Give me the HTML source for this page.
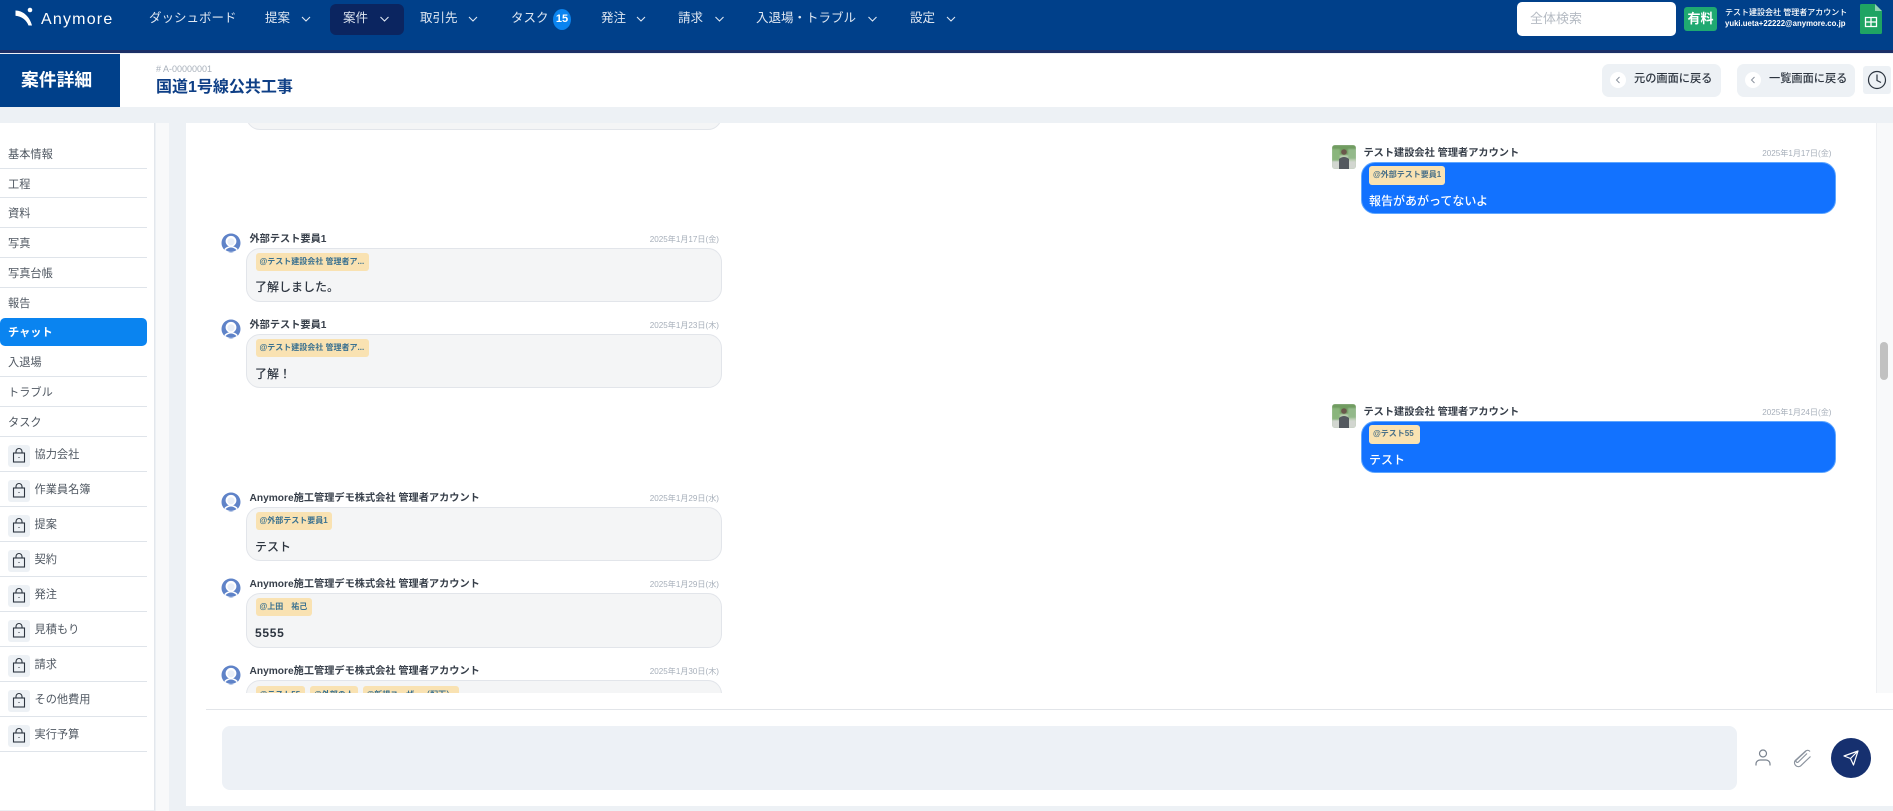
<!DOCTYPE html>
<html lang="ja">
<head>
<meta charset="utf-8">
<title>案件詳細</title>
<style>
html,body{margin:0;padding:0}
body{width:1893px;height:811px;position:relative;overflow:hidden;background:#edf1f5;font-family:"Liberation Sans","Noto Sans CJK JP",sans-serif;color:#2d3540}
.a{position:absolute;box-sizing:border-box}
.t{position:absolute;white-space:nowrap;line-height:16px;height:16px}
.nav{color:#dfe7f2;font-size:12.5px;top:10px}
.side{color:#4f5761;font-size:11.2px;left:8px;margin-top:1px}
.div{position:absolute;left:0;width:147px;height:1px;background:#dfe4ea}
.ib{position:absolute;left:8px;width:22px;height:22px;border-radius:3px;background:#edf1f5}
.name{font-size:10.2px;font-weight:700;color:#373f4a;margin-top:2px}
.date{font-size:8.1px;color:#a7afba;text-align:right;width:90px;margin-top:2px}
.bub{position:absolute;left:246px;width:474px;background:#f4f5f6;border:1px solid #e2e5ea;border-radius:14px}
.me{position:absolute;left:1361px;width:473px;height:50px;background:#1272ff;border-radius:14px;border:1px solid #5ea6ff}
.tag{position:absolute;height:18px;background:#f9e2b2;border-radius:3px;color:#3a7190;font-size:8px;font-weight:700;line-height:17px;padding-left:4px;box-sizing:border-box;white-space:nowrap;overflow:hidden}
.msg{font-size:12px;font-weight:500;color:#2d3540;left:255px}
</style>
</head>
<body>
<!-- top bar -->
<div class="a" style="left:0;top:0;width:1893px;height:50px;background:#00408a"></div>
<div class="a" style="left:0;top:50px;width:1893px;height:3px;background:#1c2f66"></div>
<svg class="a" style="left:14px;top:6px" width="22" height="22" viewBox="0 0 22 22"><path d="M1.500 4.500C8.500 4.500 15.500 10 18 19.500L14.500 19.500C12.500 14 7.500 10.500 1.500 9.800z" fill="#fff"/><circle cx="16" cy="4" r="2.300" fill="#fff"/></svg>
<div class="t" style="left:41px;top:12px;color:#fff;font-size:16px;letter-spacing:1.200px">Anymore</div>
<div class="a" style="left:330px;top:4px;width:74px;height:31px;background:#0b2560;border-radius:6px"></div>
<div class="t nav" style="left:149px">ダッシュボード</div>
<div class="t nav" style="left:265px">提案</div>
<div class="t nav" style="left:343px">案件</div>
<div class="t nav" style="left:420px">取引先</div>
<div class="t nav" style="left:511px">タスク</div>
<div class="a" style="left:553px;top:9px;width:18px;height:21px;border-radius:50%;background:#0a84f0;color:#fff;font-size:11px;font-weight:700;text-align:center;line-height:21px">15</div>
<div class="t nav" style="left:601px">発注</div>
<div class="t nav" style="left:678px">請求</div>
<div class="t nav" style="left:756px">入退場・トラブル</div>
<div class="t nav" style="left:910px">設定</div>
<svg class="a" style="left:0;top:0" width="1000" height="40" fill="none" stroke="#dfe7f2" stroke-width="1.100"><path d="M302 17l4 4 4-4M380.500 17l4 4 4-4M469 17l4 4 4-4M637 17l4 4 4-4M715.500 17l4 4 4-4M868.500 17l4 4 4-4M947 17l4 4 4-4"/></svg>
<div class="a" style="left:1517px;top:2px;width:159px;height:34px;background:#fff;border-radius:5px"></div>
<div class="t" style="left:1530px;top:11px;font-size:13px;color:#b5bbc3">全体検索</div>
<div class="a" style="left:1684px;top:7px;width:33px;height:24px;background:#1fa971;border-radius:3px;color:#fff;font-size:13px;font-weight:700;text-align:center;line-height:24px">有料</div>
<div class="t" style="left:1725px;top:5px;color:#fff;font-size:8px;font-weight:500">テスト建設会社 管理者アカウント</div>
<div class="t" style="left:1725px;top:16px;color:#fff;font-size:7.800px;font-weight:700">yuki.ueta+22222@anymore.co.jp</div>
<svg class="a" style="left:1860px;top:4px" width="22" height="30" viewBox="0 0 22 30"><path d="M1.500 0H15L22 7V28.500a1.500 1.500 0 0 1-1.500 1.500h-19A1.500 1.500 0 0 1 0 28.500V1.500A1.500 1.500 0 0 1 1.500 0z" fill="#1fa463"/><path d="M15 0L22 7H15z" fill="#8fd3b0"/><path d="M5.500 13.500h11v9h-11zM5.500 18h11M11 13.500v9" fill="none" stroke="#fff" stroke-width="1.300"/></svg>

<!-- title row -->
<div class="a" style="left:0;top:54px;width:1893px;height:53px;background:#fff"></div>
<div class="a" style="left:0;top:54px;width:120px;height:53px;background:#00408a"></div>
<div class="t" style="left:21px;top:72px;color:#fff;font-size:17.800px;font-weight:700">案件詳細</div>
<div class="t" style="left:156px;top:61px;color:#a7afba;font-size:9px"># A-00000001</div>
<div class="t" style="left:156px;top:80px;color:#0e3f86;font-size:16px;font-weight:700">国道1号線公共工事</div>

<div class="a" style="left:1602px;top:64px;width:119px;height:33px;background:#edf1f5;border-radius:7px"></div>
<div class="a" style="left:1610px;top:72px;width:16px;height:16px;background:#fff;border-radius:50%"></div>
<div class="t" style="left:1634px;top:71px;font-size:11.200px;font-weight:500;color:#2d3540">元の画面に戻る</div>
<div class="a" style="left:1737px;top:64px;width:118px;height:33px;background:#edf1f5;border-radius:7px"></div>
<div class="a" style="left:1745px;top:72px;width:16px;height:16px;background:#fff;border-radius:50%"></div>
<div class="t" style="left:1769px;top:71px;font-size:11.200px;font-weight:500;color:#2d3540">一覧画面に戻る</div>
<svg class="a" style="left:1600px;top:70px" width="170" height="20" fill="none" stroke="#8b939e" stroke-width="1"><path d="M19.500 7l-3 3 3 3M154.500 7l-3 3 3 3"/></svg>
<div class="a" style="left:1863px;top:66px;width:28px;height:28px;background:#edf1f5;border-radius:3px"></div>
<svg class="a" style="left:1867px;top:70px" width="20" height="20" fill="none" stroke="#2d3540" stroke-width="1.200"><circle cx="10" cy="10" r="8.500"/><path d="M10 4.500V10.500L14 12.500"/></svg>

<!-- sidebar -->
<div class="a" style="left:0;top:123px;width:155px;height:688px;background:#fff;border-right:1px solid #e3e7ec;border-bottom:1px solid #eceff3"></div>
<div class="a" style="left:156px;top:123px;width:13px;height:688px;background:#f8f9fa"></div>
<div class="t side" style="top:146px">基本情報</div><div class="div" style="top:168px"></div>
<div class="t side" style="top:176px">工程</div><div class="div" style="top:197px"></div>
<div class="t side" style="top:205px">資料</div><div class="div" style="top:227px"></div>
<div class="t side" style="top:235px">写真</div><div class="div" style="top:257px"></div>
<div class="t side" style="top:265px">写真台帳</div><div class="div" style="top:287px"></div>
<div class="t side" style="top:295px">報告</div>
<div class="a" style="left:0;top:318px;width:147px;height:28px;background:#0a84f0;border-radius:5px"></div>
<div class="t side" style="top:324px;color:#fff;font-weight:700">チャット</div>
<div class="t side" style="top:354px">入退場</div><div class="div" style="top:376px"></div>
<div class="t side" style="top:384px">トラブル</div><div class="div" style="top:406px"></div>
<div class="t side" style="top:414px">タスク</div><div class="div" style="top:436px"></div>

<div class="ib" style="top:445px"></div><div class="t side" style="left:34.500px;top:446px">協力会社</div><div class="div" style="top:471px"></div>
<div class="ib" style="top:480px"></div><div class="t side" style="left:34.500px;top:481px">作業員名簿</div><div class="div" style="top:506px"></div>
<div class="ib" style="top:515px"></div><div class="t side" style="left:34.500px;top:516px">提案</div><div class="div" style="top:541px"></div>
<div class="ib" style="top:550px"></div><div class="t side" style="left:34.500px;top:551px">契約</div><div class="div" style="top:576px"></div>
<div class="ib" style="top:585px"></div><div class="t side" style="left:34.500px;top:586px">発注</div><div class="div" style="top:611px"></div>
<div class="ib" style="top:620px"></div><div class="t side" style="left:34.500px;top:621px">見積もり</div><div class="div" style="top:646px"></div>
<div class="ib" style="top:655px"></div><div class="t side" style="left:34.500px;top:656px">請求</div><div class="div" style="top:681px"></div>
<div class="ib" style="top:690px"></div><div class="t side" style="left:34.500px;top:691px">その他費用</div><div class="div" style="top:716px"></div>
<div class="ib" style="top:725px"></div><div class="t side" style="left:34.500px;top:726px">実行予算</div><div class="div" style="top:751px"></div>
<svg class="a" style="left:8px;top:445px" width="22" height="302" viewBox="0 0 22 302" fill="none" stroke="#2d3540" stroke-width="1.100">
<defs><g id="lk"><rect x="5.500" y="8" width="11" height="9"/><path d="M8 8V6.500a3 3 0 0 1 6 0V8M10.500 12.500h1"/></g></defs>
<use href="#lk"/><use href="#lk" y="35"/><use href="#lk" y="70"/><use href="#lk" y="105"/><use href="#lk" y="140"/><use href="#lk" y="175"/><use href="#lk" y="210"/><use href="#lk" y="245"/><use href="#lk" y="280"/>
</svg>

<!-- main panel -->
<div class="a" style="left:186px;top:123px;width:1707px;height:683px;background:#fff"></div>
<div class="a" style="left:1876px;top:123px;width:17px;height:572px;background:#f8f9fa;border-left:1px solid #eef0f3"></div>
<div class="a" style="left:1880px;top:342px;width:8px;height:38px;background:#c1c1c1;border-radius:4px"></div>

<div class="a" style="left:186px;top:123px;width:1690px;height:570px;overflow:hidden">
  <svg width="0" height="0" style="position:absolute"><defs>
    <filter id="bl" x="-10%" y="-10%" width="120%" height="120%"><feGaussianBlur stdDeviation=".8"/></filter>
    <clipPath id="rc"><rect width="24" height="24" rx="3"/></clipPath>
    <g id="ph"><g clip-path="url(#rc)"><rect width="24" height="24" fill="#b9cdb0"/><g filter="url(#bl)"><rect width="24" height="10" fill="#6f9c60"/><rect x="0" y="4" width="8" height="12" fill="#8ab57c"/><rect x="16" y="4" width="8" height="10" fill="#93b98a"/><rect y="16" width="24" height="8" fill="#d2d6d0"/></g><circle cx="12" cy="7" r="2.800" fill="#6a584c"/><path d="M7 24V14q5-4 10 0V24z" fill="#54595f"/></g></g>
    <g id="av"><circle cx="10" cy="10" r="9.500" fill="#5f83c8"/><circle cx="10" cy="8.300" r="5.400" fill="#fff"/><circle cx="10" cy="8.800" r="3.600" fill="#e8eef8"/><path d="M2.500 19L3.800 15.500Q10 10.500 16.200 15.500L17.500 19z" fill="#fff"/><path d="M4.500 17Q10 12 15.500 17A9 9 0 0 1 4.500 17z" fill="#5f83c8"/></g>
  </defs></svg>
  <div class="bub" style="left:60px;top:-60px;height:65px"></div>

  <!-- right 1 -->
  <svg class="a" style="left:1146px;top:22px" width="24" height="24"><use href="#ph"/></svg>
  <div class="t name" style="left:1177.500px;top:21px">テスト建設会社 管理者アカウント</div>
  <div class="t date" style="left:1555.500px;top:21px">2025年1月17日(金)</div>
  <div class="me" style="left:1174.500px;top:39px"></div>
  <div class="tag" style="left:1183px;top:43px;width:76px;height:19px;color:#4a7088">@外部テスト要員1</div>
  <div class="t msg" style="left:1183px;top:70px;color:#fff">報告があがってないよ</div>

  <!-- left 1 -->
  <svg class="a" style="left:35px;top:110px" width="20" height="20" viewBox="0 0 20 20"><use href="#av"/></svg>
  <div class="t name" style="left:63.500px;top:107px">外部テスト要員1</div>
  <div class="t date" style="left:443px;top:107px">2025年1月17日(金)</div>
  <div class="bub" style="left:60px;top:125px;height:52px"></div>
  <div class="tag" style="left:69.500px;top:130px;width:113px">@テスト建設会社 管理者ア...</div>
  <div class="t msg" style="left:69px;top:156px">了解しました。</div>

  <!-- left 2 -->
  <svg class="a" style="left:35px;top:196px" width="20" height="20" viewBox="0 0 20 20"><use href="#av"/></svg>
  <div class="t name" style="left:63.500px;top:193px">外部テスト要員1</div>
  <div class="t date" style="left:443px;top:193px">2025年1月23日(木)</div>
  <div class="bub" style="left:60px;top:211px;height:52px"></div>
  <div class="tag" style="left:69.500px;top:216px;width:113px">@テスト建設会社 管理者ア...</div>
  <div class="t msg" style="left:69px;top:243px">了解！</div>

  <!-- right 2 -->
  <svg class="a" style="left:1146px;top:281px" width="24" height="24"><use href="#ph"/></svg>
  <div class="t name" style="left:1177.500px;top:280px">テスト建設会社 管理者アカウント</div>
  <div class="t date" style="left:1555.500px;top:280px">2025年1月24日(金)</div>
  <div class="me" style="left:1174.500px;top:298px"></div>
  <div class="tag" style="left:1183px;top:302px;width:51px;height:19px;color:#4a7088">@テスト55</div>
  <div class="t msg" style="left:1183px;top:329px;color:#fff">テスト</div>

  <!-- left 3 -->
  <svg class="a" style="left:35px;top:369px" width="20" height="20" viewBox="0 0 20 20"><use href="#av"/></svg>
  <div class="t name" style="left:63.500px;top:366px">Anymore施工管理デモ株式会社 管理者アカウント</div>
  <div class="t date" style="left:443px;top:366px">2025年1月29日(水)</div>
  <div class="bub" style="left:60px;top:384px;height:52px"></div>
  <div class="tag" style="left:69.500px;top:389px;width:76px">@外部テスト要員1</div>
  <div class="t msg" style="left:69px;top:416px">テスト</div>

  <!-- left 4 -->
  <svg class="a" style="left:35px;top:455px" width="20" height="20" viewBox="0 0 20 20"><use href="#av"/></svg>
  <div class="t name" style="left:63.500px;top:452px">Anymore施工管理デモ株式会社 管理者アカウント</div>
  <div class="t date" style="left:443px;top:452px">2025年1月29日(水)</div>
  <div class="bub" style="left:60px;top:470px;height:53px"></div>
  <div class="tag" style="left:69.500px;top:475px;width:56px">@上田　祐己</div>
  <div class="t msg" style="left:69px;top:502px;font-weight:700;letter-spacing:.7px">5555</div>

  <!-- left 5 -->
  <svg class="a" style="left:35px;top:542px" width="20" height="20" viewBox="0 0 20 20"><use href="#av"/></svg>
  <div class="t name" style="left:63.500px;top:539px">Anymore施工管理デモ株式会社 管理者アカウント</div>
  <div class="t date" style="left:443px;top:539px">2025年1月30日(木)</div>
  <div class="bub" style="left:60px;top:557px;height:53px"></div>
  <div class="tag" style="left:69.500px;top:562.500px;width:49px">@テスト55</div>
  <div class="tag" style="left:124px;top:562.500px;width:47.500px">@外部の人</div>
  <div class="tag" style="left:176.500px;top:562.500px;width:96px">@新規ユーザー（配下）</div>
</div>
<div class="a" style="left:186px;top:693px;width:1707px;height:113px;background:#fff"></div>

<!-- composer -->
<div class="a" style="left:206px;top:709px;width:1687px;height:1px;background:#e2e5e9"></div>
<div class="a" style="left:222px;top:726px;width:1515px;height:64px;background:#edf1f6;border-radius:8px"></div>
<svg class="a" style="left:1753px;top:748px" width="20" height="20" fill="none" stroke="#79828e" stroke-width="1.200"><circle cx="10" cy="5.500" r="3.500"/><path d="M3 17.500v-1.500a4 4 0 0 1 4-4h6a4 4 0 0 1 4 4v1.500"/></svg>
<svg class="a" style="left:1792px;top:748px" width="20" height="20" viewBox="0 0 20 20" fill="none" stroke="#8b939e" stroke-width="1.200"><path d="M18 3.500a3 3 0 0 0-4.300-.5L3.200 12.500a3.900 3.900 0 0 0 5.300 5.500L18.500 8.500M15 5.500L6.300 14a1.400 1.400 0 0 1-2-2L14 3"/></svg>
<div class="a" style="left:1831px;top:738px;width:40px;height:40px;border-radius:50%;background:#16306f"></div>
<svg class="a" style="left:1843px;top:750px" width="16" height="16" viewBox="0 0 16 16" fill="none" stroke="#fff" stroke-width="1.200" stroke-linejoin="round"><path d="M1 6L15 1L10.500 15L7.500 8.500zM7.500 8.500L15 1"/></svg>
</body>
</html>
